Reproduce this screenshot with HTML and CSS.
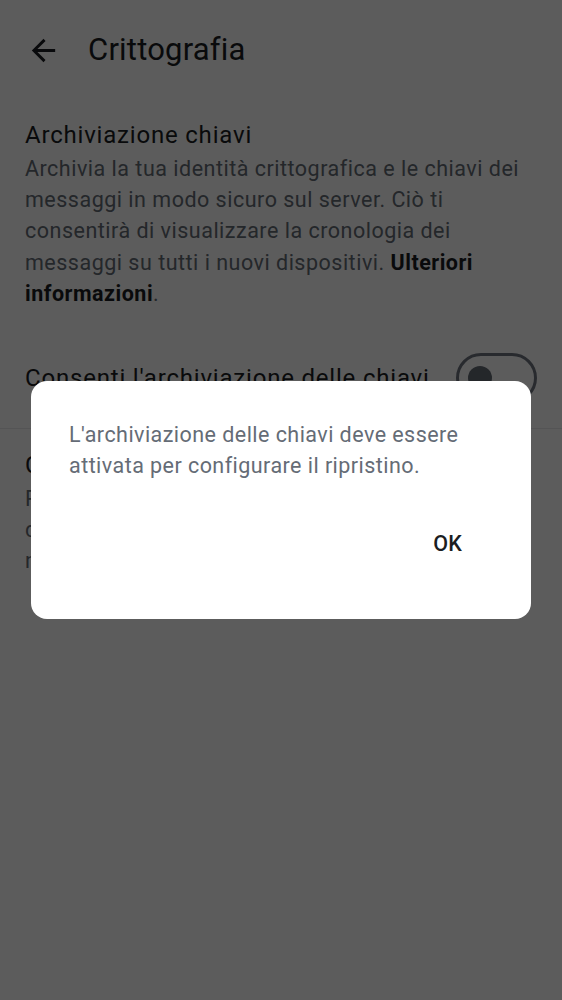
FILE: index.html
```html
<!DOCTYPE html>
<html lang="it">
<head>
<meta charset="utf-8">
<title>Crittografia</title>
<link rel="stylesheet" href="styles.css">
</head>
<body>
<div class="screen">
  <header class="topbar">
    <span class="back">
      <svg viewBox="0 0 24 24" width="35" height="35"><path d="M20 11H7.83l5.59-5.59L12 4l-8 8 8 8 1.41-1.41L7.83 13H20v-2z" fill="#1b1d22"/></svg>
    </span>
    <h1 class="title">Crittografia</h1>
  </header>

  <section class="section">
    <h2 class="heading">Archiviazione chiavi</h2>
    <p class="desc">Archivia la tua identità crittografica e le chiavi dei messaggi in modo sicuro sul server. Ciò ti consentirà di visualizzare la cronologia dei messaggi su tutti i nuovi dispositivi. <b>Ulteriori informazioni</b>.</p>
  </section>

  <div class="row">
    <span class="row-label">Consenti l'archiviazione delle chiavi</span>
    <span class="switch"><span class="thumb"></span></span>
  </div>

  <div class="divider"></div>

  <section class="section second">
    <h2 class="heading">Configura il ripristino</h2>
    <p class="desc">Proteggi il tuo account con una chiave<br>di ripristino, che ti consentirà di<br>non perdere l'accesso ai messaggi.</p>
  </section>

  <div class="scrim">
    <div class="dialog">
      <p class="dialog-text">L'archiviazione delle chiavi deve essere attivata per configurare il ripristino.</p>
      <div class="actions">
        <button class="btn">OK</button>
      </div>
    </div>
  </div>
</div>
</body>
</html>
```

FILE: styles.css
```css
* { box-sizing: border-box; }
html, body {
  margin: 0;
  padding: 0;
  background: #ffffff;
}
body {
  font-family: Roboto, "Noto Sans", "Liberation Sans", sans-serif;
  color: #1b1d22;
}
.screen {
  width: 562px;
  height: 1000px;
  overflow: hidden;
  position: relative;
}
.topbar {
  height: 100px;
  display: flex;
  align-items: center;
  padding-left: 26px;
}
.back {
  width: 35px;
  height: 35px;
  display: flex;
}
.back svg { display: block; }
.title {
  margin: 0 0 0 27px;
  font-size: 31px;
  font-weight: 400;
  line-height: 40px;
  letter-spacing: 0.2px;
  color: #1b1d22;
}
.section {
  padding: 17px 25px 0 25px;
}
.heading {
  margin: 0;
  font-size: 24px;
  font-weight: 400;
  line-height: 36px;
  letter-spacing: 0.8px;
  color: #1b1d22;
}
.desc {
  margin: 0;
  font-size: 21.5px;
  line-height: 31.2px;
  letter-spacing: 0.5px;
  color: #656c76;
}
.desc b {
  font-weight: 700;
  color: #1b1d22;
}
.row {
  display: flex;
  align-items: center;
  justify-content: space-between;
  padding: 25px 25px 25px 25px;
  margin-top: 19px;
}
.row-label {
  font-size: 24px;
  line-height: 36px;
  letter-spacing: 0.8px;
  color: #1b1d22;
}
.switch {
  width: 81px;
  height: 50px;
  flex: none;
  border: 3px solid #6f7580;
  border-radius: 25px;
  display: flex;
  align-items: center;
  padding-left: 9px;
  background: #ffffff;
}
.thumb {
  width: 24px;
  height: 24px;
  border-radius: 50%;
  background: #656c76;
}
.divider {
  height: 1px;
  background: #e8e9ec;
}
.second {
  padding-top: 18px;
}
.scrim {
  position: fixed;
  inset: 0;
  background: rgba(0, 0, 0, 0.64);
  display: flex;
  align-items: center;
  justify-content: center;
}
.dialog {
  width: 500px;
  height: 238px;
  background: #ffffff;
  border-radius: 16px;
  padding: 38px 38px 0 38px;
  display: flex;
  flex-direction: column;
}
.dialog-text {
  margin: 0;
  font-size: 21.5px;
  line-height: 31px;
  letter-spacing: 0.45px;
  color: #656c76;
}
.actions {
  display: flex;
  justify-content: flex-end;
  margin-top: 32px;
}
.btn {
  height: 60px;
  padding: 0 31px;
  border: none;
  background: transparent;
  font-family: Roboto, "Noto Sans", "Liberation Sans", sans-serif;
  font-size: 21.5px;
  font-weight: 500;
  color: #1b1d22;
  border-radius: 30px;
  letter-spacing: 0.2px;
}
```
